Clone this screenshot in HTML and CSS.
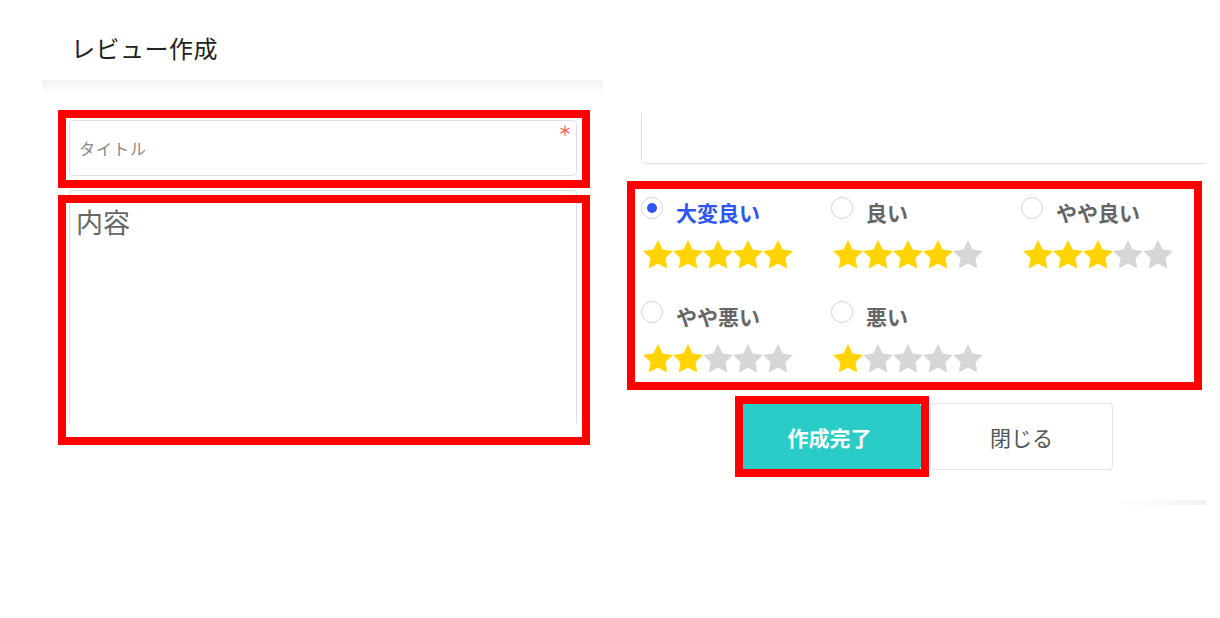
FILE: index.html
```html
<!DOCTYPE html>
<html lang="ja">
<head>
<meta charset="utf-8">
<title>レビュー作成</title>
<link rel="stylesheet" href="styles.css">
</head>
<body>
<svg width="0" height="0" class="defs" aria-hidden="true">
  <defs>
    <polygon id="star" points="12,2 15.09,8.26 22,9.27 17,14.14 18.18,21.02 12,17.77 5.82,21.02 7,14.14 2,9.27 8.91,8.26"/>
  </defs>
</svg>
<div class="page">
  <section class="panel-left">
    <header class="header"><h1 class="title">レビュー作成</h1></header>
    <div class="form">
      <div class="field">
        <div class="input"><span class="placeholder">タイトル</span><span class="required">＊</span></div>
        <div class="mark mark-input"></div>
      </div>
      <div class="field">
        <div class="textarea"><span class="ta-placeholder">内容</span></div>
        <div class="mark mark-textarea"></div>
      </div>
    </div>
  </section>

  <section class="panel-right">
    <div class="textarea-stub"></div>
    <div class="rating-wrap">
      <div class="rating">
        <label class="option">
          <span class="opt-head"><span class="radio checked"></span><span class="opt-label active">大変良い</span></span>
          <span class="stars"><svg viewBox="2 2 20 19.02" class="star on"><use href="#star"/></svg><svg viewBox="2 2 20 19.02" class="star on"><use href="#star"/></svg><svg viewBox="2 2 20 19.02" class="star on"><use href="#star"/></svg><svg viewBox="2 2 20 19.02" class="star on"><use href="#star"/></svg><svg viewBox="2 2 20 19.02" class="star on"><use href="#star"/></svg></span>
        </label>
        <label class="option">
          <span class="opt-head"><span class="radio"></span><span class="opt-label">良い</span></span>
          <span class="stars"><svg viewBox="2 2 20 19.02" class="star on"><use href="#star"/></svg><svg viewBox="2 2 20 19.02" class="star on"><use href="#star"/></svg><svg viewBox="2 2 20 19.02" class="star on"><use href="#star"/></svg><svg viewBox="2 2 20 19.02" class="star on"><use href="#star"/></svg><svg viewBox="2 2 20 19.02" class="star off"><use href="#star"/></svg></span>
        </label>
        <label class="option">
          <span class="opt-head"><span class="radio"></span><span class="opt-label">やや良い</span></span>
          <span class="stars"><svg viewBox="2 2 20 19.02" class="star on"><use href="#star"/></svg><svg viewBox="2 2 20 19.02" class="star on"><use href="#star"/></svg><svg viewBox="2 2 20 19.02" class="star on"><use href="#star"/></svg><svg viewBox="2 2 20 19.02" class="star off"><use href="#star"/></svg><svg viewBox="2 2 20 19.02" class="star off"><use href="#star"/></svg></span>
        </label>
        <label class="option">
          <span class="opt-head"><span class="radio"></span><span class="opt-label">やや悪い</span></span>
          <span class="stars"><svg viewBox="2 2 20 19.02" class="star on"><use href="#star"/></svg><svg viewBox="2 2 20 19.02" class="star on"><use href="#star"/></svg><svg viewBox="2 2 20 19.02" class="star off"><use href="#star"/></svg><svg viewBox="2 2 20 19.02" class="star off"><use href="#star"/></svg><svg viewBox="2 2 20 19.02" class="star off"><use href="#star"/></svg></span>
        </label>
        <label class="option">
          <span class="opt-head"><span class="radio"></span><span class="opt-label">悪い</span></span>
          <span class="stars"><svg viewBox="2 2 20 19.02" class="star on"><use href="#star"/></svg><svg viewBox="2 2 20 19.02" class="star off"><use href="#star"/></svg><svg viewBox="2 2 20 19.02" class="star off"><use href="#star"/></svg><svg viewBox="2 2 20 19.02" class="star off"><use href="#star"/></svg><svg viewBox="2 2 20 19.02" class="star off"><use href="#star"/></svg></span>
        </label>
      </div>
      <div class="mark mark-rating"></div>
    </div>
    <div class="actions">
      <div class="btn-wrap">
        <button class="btn btn-primary">作成完了</button>
        <div class="mark mark-btn"></div>
      </div>
      <button class="btn btn-default">閉じる</button>
    </div>
    <div class="panel-foot"></div>
  </section>
</div>
</body>
</html>
```

FILE: styles.css
```css
html, body {
  margin: 0;
  padding: 0;
  background: #ffffff;
}
body {
  font-family: "Noto Sans CJK JP", "Noto Sans", sans-serif;
  color: #333;
  width: 1220px;
  height: 618px;
  overflow: hidden;
}
.defs {
  position: absolute;
  width: 0;
  height: 0;
}
.page {
  display: flex;
  align-items: flex-start;
}

/* left panel */
.panel-left {
  margin-left: 42px;
  width: 561px;
}
.header {
  height: 80px;
  box-sizing: border-box;
  padding: 32px 0 0 29px;
  background: #fff;
  position: relative;
}
.header::after {
  content: "";
  position: absolute;
  left: 0;
  right: 0;
  top: 80px;
  height: 14px;
  background: linear-gradient(to bottom, rgba(0, 0, 0, 0.055), rgba(0, 0, 0, 0));
}
.title {
  margin: 0;
  font-size: 24px;
  line-height: 32px;
  font-weight: 400;
  color: #222;
  letter-spacing: 0.5px;
}
.form {
  padding: 40px 0 0 27px;
  display: flex;
  flex-direction: column;
  gap: 14px;
}
.field {
  position: relative;
  width: 508px;
}
.input {
  height: 56px;
  box-sizing: border-box;
  border: 1px solid #dcdfe6;
  border-radius: 4px;
  padding-left: 9px;
  display: flex;
  align-items: center;
  position: relative;
}
.placeholder {
  font-size: 16px;
  color: #8a8a8a;
  letter-spacing: 1px;
}
.required {
  position: absolute;
  right: 4px;
  top: 1px;
  font-size: 14px;
  line-height: 16px;
  font-weight: 700;
  color: #ff6b6b;
}
.textarea {
  height: 233px;
  box-sizing: border-box;
  border: 1px solid #dcdfe6;
  border-bottom: none;
  border-radius: 4px 4px 0 0;
  padding: 14px 0 0 6px;
}
.ta-placeholder {
  font-size: 27px;
  line-height: 34px;
  color: #666;
}

/* annotation marks */
.mark {
  position: absolute;
  border: 8px solid #ff0000;
  pointer-events: none;
}
.mark-input { left: -11px; right: -13px; top: -10px; bottom: -12px; }
.mark-textarea { left: -11px; right: -13px; top: 5px; bottom: -22px; }
.mark-rating { left: -14px; right: 4px; top: -14px; bottom: -18px; }
.mark-btn { left: -3px; right: -8px; top: -7px; bottom: -7px; }

/* right panel */
.panel-right {
  margin-left: 24px;
  width: 579px;
  box-sizing: border-box;
  padding: 113px 0 0 14px;
  display: flex;
  flex-direction: column;
}
.textarea-stub {
  height: 51px;
  box-sizing: border-box;
  border-left: 1px solid #dcdfe6;
  border-bottom: 1px solid #dcdfe6;
  border-radius: 0 0 0 5px;
}
.rating-wrap {
  position: relative;
  margin-top: 31px;
}
.rating {
  display: grid;
  grid-template-columns: 190px 190px 185px;
  row-gap: 30px;
}
.option {
  display: flex;
  flex-direction: column;
}
.opt-head {
  display: flex;
  align-items: flex-start;
  height: 34px;
  gap: 13px;
}
.radio {
  width: 22px;
  height: 22px;
  box-sizing: border-box;
  border: 1px solid #cdd5e2;
  border-radius: 50%;
  margin-top: 2px;
  display: flex;
  align-items: center;
  justify-content: center;
  background: #fff;
}
.radio.checked::after {
  content: "";
  width: 10px;
  height: 10px;
  border-radius: 50%;
  background: #3056f0;
}
.opt-label {
  font-size: 21px;
  line-height: 34px;
  font-weight: 700;
  color: #666;
}
.opt-label.active {
  color: #3056f0;
}
.stars {
  display: flex;
  margin-top: 11px;
  margin-left: 2px;
}
.star {
  width: 30px;
  height: 28.5px;
  display: block;
}
.star.on { fill: #ffd400; }
.star.off { fill: #d6d6d6; }

/* buttons */
.actions {
  display: flex;
  gap: 9px;
  margin-top: 31px;
  margin-left: 97px;
}
.btn-wrap {
  position: relative;
}
.btn {
  width: 183px;
  height: 67px;
  box-sizing: border-box;
  border-radius: 4px;
  font-family: inherit;
  font-size: 21px;
  cursor: pointer;
  display: block;
}
.btn-primary {
  background: #2accc8;
  border: 1px solid #2accc8;
  color: #fff;
  font-weight: 700;
}
.btn-default {
  background: #fff;
  border: 1px solid #e4e4e4;
  color: #555;
}
.panel-foot {
  margin-top: 30px;
  align-self: flex-end;
  width: 90px;
  height: 5px;
  background: linear-gradient(to right, rgba(240, 240, 240, 0), #f2f2f2);
}
```
